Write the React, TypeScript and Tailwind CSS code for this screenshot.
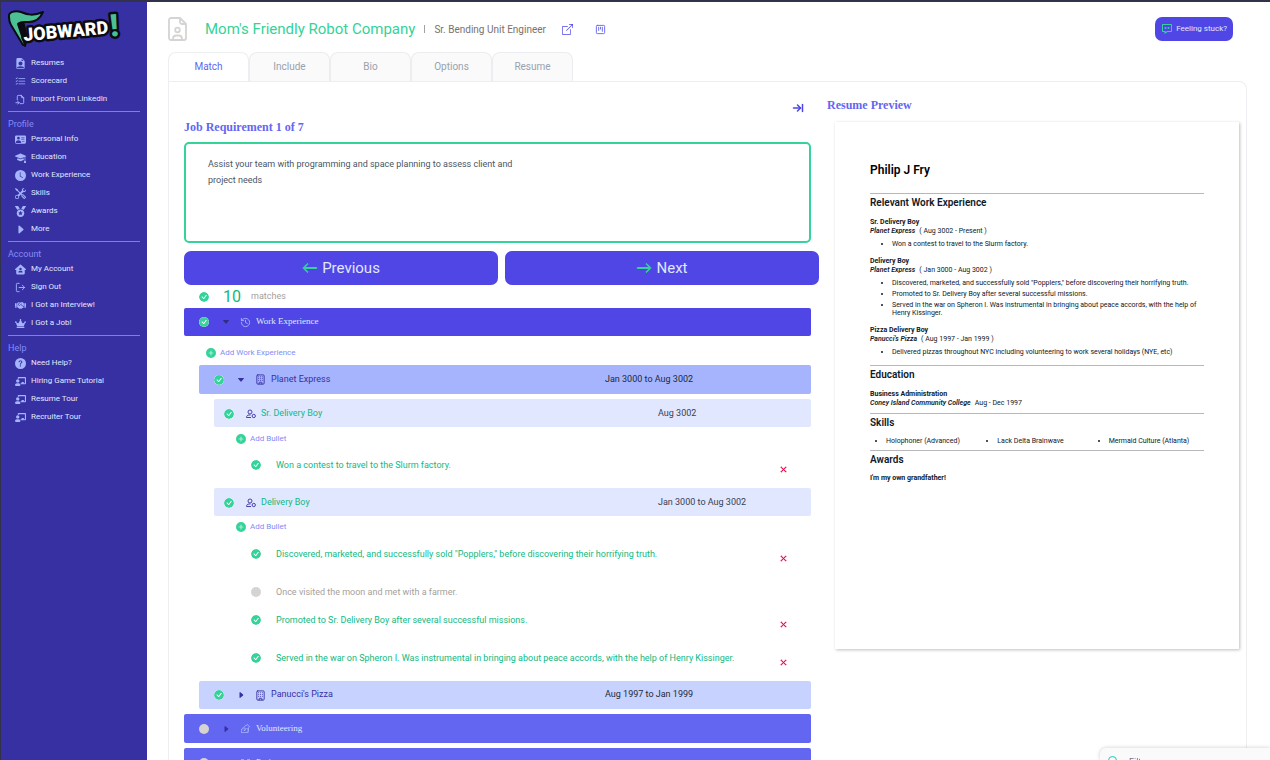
import { useState } from 'react';

import { ArrowRightToLine, Building, History, LogOut, SquareKanban } from 'lucide-react';
import { BiMessageDots } from 'react-icons/bi';
import {
  BsArrowLeft,
  BsArrowRight,
  BsBoxArrowUpRight,
  BsCaretDownFill,
  BsCaretRightFill,
  BsCheckCircleFill,
  BsCircleFill,
  BsClockFill,
  BsFileEarmarkPersonFill,
  BsListCheck,
  BsMortarboardFill,
  BsPersonVcardFill,
  BsPlusCircleFill,
  BsQuestionCircleFill,
  BsTools,
  BsXLg,
} from 'react-icons/bs';
import { FaChalkboardTeacher, FaCrown, FaHandshake, FaMedal } from 'react-icons/fa';
import { FaHouseUser } from 'react-icons/fa6';
import { LiaHandsHelpingSolid, LiaProjectDiagramSolid } from 'react-icons/lia';
import { TbFileImport } from 'react-icons/tb';

import type { ComponentType, FC, ReactNode } from 'react';

type IconComponent = ComponentType<{ className?: string }>;
type NavItem = { title: string, icon: IconComponent };
type NavSection = { title?: string, items: NavItem[] };

const navSections: NavSection[] = [
  {
    items: [
      { title: 'Resumes', icon: BsFileEarmarkPersonFill },
      { title: 'Scorecard', icon: BsListCheck },
      { title: 'Import From LinkedIn', icon: TbFileImport },
    ],
  },
  {
    title: 'Profile',
    items: [
      { title: 'Personal Info', icon: BsPersonVcardFill },
      { title: 'Education', icon: BsMortarboardFill },
      { title: 'Work Experience', icon: BsClockFill },
      { title: 'Skills', icon: BsTools },
      { title: 'Awards', icon: FaMedal },
      { title: 'More', icon: BsCaretRightFill },
    ],
  },
  {
    title: 'Account',
    items: [
      { title: 'My Account', icon: FaHouseUser },
      { title: 'Sign Out', icon: LogOut },
      { title: 'I Got an Interview!', icon: FaHandshake },
      { title: 'I Got a Job!', icon: FaCrown },
    ],
  },
  {
    title: 'Help',
    items: [
      { title: 'Need Help?', icon: BsQuestionCircleFill },
      { title: 'Hiring Game Tutorial', icon: FaChalkboardTeacher },
      { title: 'Resume Tour', icon: FaChalkboardTeacher },
      { title: 'Recruiter Tour', icon: FaChalkboardTeacher },
    ],
  },
];

const tabs = ['Match', 'Include', 'Bio', 'Options', 'Resume'];

const Logo: FC = () => (
  <svg className="h-[42px] w-[116px] overflow-visible" viewBox="0 0 116 42" role="img" aria-label="Jobward">
    <path d="M8 12 17 36 19 28 15 11Z" fill="#0b0b12" stroke="#0b0b12" strokeWidth="2" strokeLinejoin="round" />
    <path
      d="M1 7C0 2 7 0 13 2c7 3 12 4 22 0-3 7-8 10-14 10-5 0-8-1-11 2l7 21h-2L3 15C1 12 1 10 1 7Z"
      fill="#4cbf95"
      stroke="#0b0b12"
      strokeWidth="2"
      strokeLinejoin="round"
    />
    <g
      transform="rotate(-5 16 34)"
      fontFamily="Roboto, sans-serif"
      fontWeight="900"
      strokeLinejoin="round"
      paintOrder="stroke"
      stroke="#0b0b12"
      strokeWidth="5"
    >
      <text x="16" y="31" fontSize="18" fill="#fff">JOBWARD</text>
      <text x="103" y="34" fontSize="31" fill="#4cbf95">!</text>
    </g>
  </svg>
);

const FilePersonIcon: FC = () => (
  <svg
    className="h-6 w-5 text-stone-300"
    viewBox="0 0 20 24"
    fill="none"
    stroke="currentColor"
    strokeWidth="1.8"
    strokeLinejoin="round"
    aria-hidden="true"
  >
    <path d="M3 1h9l6 6v14a2 2 0 0 1-2 2H3a2 2 0 0 1-2-2V3a2 2 0 0 1 2-2Z" />
    <path d="M12 1v4a2 2 0 0 0 2 2h4" />
    <circle cx="9.5" cy="13" r="2.3" />
    <path d="M5 23v-1c0-2 1.5-3.500 3.500-3.500h2c2 0 3.500 1.500 3.500 3.500v1" />
  </svg>
);

const PersonBadgeIcon: FC = () => (
  <svg
    className="mr-[5px] ml-3 size-[10px] text-[#3730a3]"
    viewBox="0 0 20 20"
    fill="none"
    stroke="currentColor"
    strokeWidth="1.8"
    strokeLinejoin="round"
    aria-hidden="true"
  >
    <circle cx="8" cy="6" r="4" />
    <path d="M10 17H1c0-3 2-5 5-5h3" />
    <circle cx="15.500" cy="14" r="3.300" />
  </svg>
);

const Sidebar: FC = () => (
  <aside className="w-[147px] shrink-0 overflow-hidden border-l border-[#32324a] bg-[#3730a3] px-[7px] pt-2">
    <a href="#" className="block h-11"><Logo /></a>
    <nav>
      {navSections.map((section) => (
        <section key={section.title ?? 'main'} className="mb-[3px]">
          {section.title && (
            <h2 className="h-[19px] border-t border-[#8583b8] pt-1 text-[9px] leading-4 text-[#818cf8]">
              {section.title}
            </h2>
          )}
          <ul>
            {section.items.map(({ title, icon: Icon }) => (
              <li key={title}>
                <a href="#" className="flex h-[18px] items-center gap-[5px] pl-[7px] text-[8px] text-[#e0e7ff]">
                  <Icon className="size-[11px] text-[#a5b4fc]" />
                  {title}
                </a>
              </li>
            ))}
          </ul>
        </section>
      ))}
    </nav>
  </aside>
);

interface CheckProps {
  label: string
  initial?: boolean
}

const Check: FC<CheckProps> = ({ label, initial = true }) => {
  const [checked, setChecked] = useState(initial);

  return (
    <label className="shrink-0 cursor-pointer">
      <input
        type="checkbox"
        className="sr-only"
        aria-label={label}
        checked={checked}
        onChange={() => setChecked(!checked)}
      />
      {checked ? (
        <BsCheckCircleFill className="size-[10px] rounded-full bg-white text-[#34d399]" />
      ) : (
        <BsCircleFill className="size-[10px] text-stone-300" />
      )}
    </label>
  );
};

const AddButton: FC<{ children: ReactNode }> = ({ children }) => (
  <button type="button" className="flex items-center gap-1 text-[8px] leading-3 text-[#818cf8]">
    <BsPlusCircleFill className="size-[10px] text-[#34d399]" />
    {children}
  </button>
);

interface SectionBarProps {
  title: string
  icon: IconComponent
  open?: boolean
}

const SectionBar: FC<SectionBarProps> = ({ title, icon: Icon, open = false }) => (
  <div
    className={`flex items-center rounded-xs pl-[15px] ${open ? 'h-7 bg-[#4f46e5]' : 'h-[29px] bg-[#6366f1]'}`}
  >
    <Check label={title} initial={open} />
    <button type="button" className="ml-[13px] flex items-center font-[Liberation_Serif,serif] text-[9px] text-[#e0e7ff]">
      {open ? (
        <BsCaretDownFill className="size-2 text-[#312e81]" />
      ) : (
        <BsCaretRightFill className="size-2 text-[#3730a3]" />
      )}
      <Icon className="mr-[5px] ml-[10px] size-[11px] text-[#a5b4fc]" />
      {title}
    </button>
  </div>
);

interface CompanyBarProps {
  title: string
  dates: string
  open?: boolean
}

const CompanyBar: FC<CompanyBarProps> = ({ title, dates, open = false }) => (
  <div
    className={`ml-[15px] flex items-center rounded-xs pl-[15px] text-[9px] text-[#3730a3] ${open ? 'h-[29px] bg-[#a5b4fc]' : 'h-7 bg-[#c7d2fe]'}`}
  >
    <Check label={title} />
    <button type="button" className="ml-[13px] flex flex-1 items-center">
      {open ? <BsCaretDownFill className="size-2" /> : <BsCaretRightFill className="size-2" />}
      <Building className="mr-[5px] ml-[10px] size-[11px]" />
      {title}
    </button>
    <span className="w-[206px] text-gray-800">{dates}</span>
  </div>
);

const RoleBar: FC<{ title: string, dates: string }> = ({ title, dates }) => (
  <div className="ml-[30px] flex h-7 items-center rounded-xs bg-[#e0e7ff] pt-px pl-[10px] text-[9px]">
    <Check label={title} />
    <PersonBadgeIcon />
    <span className="flex-1 text-[#10b981]">{title}</span>
    <span className="w-[153px] text-gray-700">{dates}</span>
  </div>
);

interface BulletProps {
  text: string
  selected?: boolean
}

const Bullet: FC<BulletProps> = ({ text, selected = true }) => (
  <li className={`flex items-start ${selected ? 'h-5' : 'h-[10px]'}`}>
    <Check label={text} initial={selected} />
    <span className={`ml-[15px] flex-1 text-[9px] leading-[10px] ${selected ? 'text-[#10b981]' : 'text-stone-400'}`}>
      {text}
    </span>
    {selected && (
      <button type="button" aria-label="Remove bullet" className="mt-[6px] mr-6">
        <BsXLg className="size-[7px] stroke-2 text-rose-600" />
      </button>
    )}
  </li>
);

const MatchPanel: FC = () => (
  <div className="pl-[15px]">
    <div className="flex justify-end pt-5 pr-[15px]">
      <button type="button" aria-label="Collapse panel">
        <ArrowRightToLine className="size-3 stroke-3 text-[#4f46e5]" />
      </button>
    </div>
    <label
      htmlFor="requirement"
      className="mt-[5px] block font-[Liberation_Serif,serif] text-[12px] leading-4 font-bold text-[#6366f1]"
    >
      Job Requirement 1 of 7
    </label>
    <div className="pr-2">
      <textarea
        id="requirement"
        className="mt-[7px] block h-[101px] w-full resize-none rounded-[5px] border-2 border-[#34d399] px-[22px] py-3 text-[9px] leading-4 text-gray-600 outline-none"
        defaultValue={'Assist your team with programming and space planning to assess client and\nproject needs'}
      />
    </div>
    <div className="mt-2 grid grid-cols-2 gap-[7px] text-[15px] text-[#e0e7ff]">
      <button type="button" className="flex h-[34px] items-center justify-center gap-1 rounded-[7px] bg-[#4f46e5]">
        <BsArrowLeft className="size-4 stroke-1 text-[#34d399]" />
        Previous
      </button>
      <button type="button" className="flex h-[34px] items-center justify-center gap-1 rounded-[7px] bg-[#4f46e5]">
        <BsArrowRight className="size-4 stroke-1 text-[#34d399]" />
        Next
      </button>
    </div>

    <div className="pr-2">
      <div className="flex h-[23px] items-center pl-[15px]">
        <Check label="All matches" />
        <span className="ml-[14px] text-[16px] text-[#10b981]">10</span>
        <span className="ml-[10px] text-[9px] text-stone-400">matches</span>
      </div>

      <SectionBar title="Work Experience" icon={History} open />
      <div className="pt-[11px] pb-[6px] pl-[22px]">
        <AddButton>Add Work Experience</AddButton>
      </div>
      <CompanyBar title="Planet Express" dates="Jan 3000 to Aug 3002" open />
      <div className="pt-[5px]">
        <RoleBar title="Sr. Delivery Boy" dates="Aug 3002" />
      </div>
      <div className="pt-[6px] pl-[52px]">
        <AddButton>Add Bullet</AddButton>
      </div>
      <ul className="mt-[15px] pl-[67px]">
        <Bullet text="Won a contest to travel to the Slurm factory." />
      </ul>
      <div className="pt-2">
        <RoleBar title="Delivery Boy" dates="Jan 3000 to Aug 3002" />
      </div>
      <div className="pt-[5px] pl-[52px]">
        <AddButton>Add Bullet</AddButton>
      </div>
      <ul className="mt-4 flex flex-col gap-[18px] pl-[67px]">
        <Bullet text={'Discovered, marketed, and successfully sold "Popplers," before discovering their horrifying truth.'} />
        <Bullet text="Once visited the moon and met with a farmer." selected={false} />
        <Bullet text="Promoted to Sr. Delivery Boy after several successful missions." />
        <Bullet text="Served in the war on Spheron I. Was instrumental in bringing about peace accords, with the help of Henry Kissinger." />
      </ul>
      <div className="flex flex-col gap-[5px] pt-2">
        <CompanyBar title="Panucci's Pizza" dates="Aug 1997 to Jan 1999" />
        <SectionBar title="Volunteering" icon={LiaHandsHelpingSolid} />
        <SectionBar title="Projects" icon={LiaProjectDiagramSolid} />
      </div>
    </div>
  </div>
);

interface ResumeSectionProps {
  title: string
  children: ReactNode
}

const ResumeSection: FC<ResumeSectionProps> = ({ title, children }) => (
  <section className="border-t border-[#b8b8bc] pt-[2px]">
    <h3 className="text-[10px] leading-[14px] font-semibold text-gray-900">{title}</h3>
    {children}
  </section>
);

interface ResumeJobProps {
  role: string
  company: string
  dates: string
  bullets: string[]
}

const ResumeJob: FC<ResumeJobProps> = ({ role, company, dates, bullets }) => (
  <div className="mb-[9px]">
    <h4 className="text-[7px] leading-[9px] font-bold">{role}</h4>
    <p className="flex gap-1 text-[7px] leading-[9px]">
      <em className="font-semibold">{company}</em>
      <span>{`( ${dates} )`}</span>
    </p>
    <ul className="mt-1 flex list-disc flex-col gap-[3px] pl-[22px] text-[7px] leading-2">
      {bullets.map((bullet) => (
        <li key={bullet}>{bullet}</li>
      ))}
    </ul>
  </div>
);

const ResumePreview: FC = () => (
  <div className="pt-[15px] pl-2">
    <h2 className="font-[Liberation_Serif,serif] text-[12px] leading-4 font-bold text-[#6366f1]">Resume Preview</h2>
    <article className="mt-[9px] mr-[7px] ml-2 min-h-[527px] bg-white px-[35px] pt-[39px] text-gray-900 shadow-[1px_1px_3px_rgba(0,0,0,0.25)]">
      <h1 className="mb-[14px] text-[12px] leading-[18px] font-semibold text-black">Philip J Fry</h1>
      <ResumeSection title="Relevant Work Experience">
        <div className="pt-2">
          <ResumeJob
            role="Sr. Delivery Boy"
            company="Planet Express"
            dates="Aug 3002 - Present"
            bullets={['Won a contest to travel to the Slurm factory.']}
          />
          <ResumeJob
            role="Delivery Boy"
            company="Planet Express"
            dates="Jan 3000 - Aug 3002"
            bullets={[
              'Discovered, marketed, and successfully sold "Popplers," before discovering their horrifying truth.',
              'Promoted to Sr. Delivery Boy after several successful missions.',
              'Served in the war on Spheron I. Was instrumental in bringing about peace accords, with the help of Henry Kissinger.',
            ]}
          />
          <ResumeJob
            role="Pizza Delivery Boy"
            company="Panucci's Pizza"
            dates="Aug 1997 - Jan 1999"
            bullets={['Delivered pizzas throughout NYC including volunteering to work several holidays (NYE, etc)']}
          />
        </div>
      </ResumeSection>
      <ResumeSection title="Education">
        <div className="pt-2 pb-[5px] text-[7px] leading-[9px]">
          <h4 className="font-bold">Business Administration</h4>
          <p className="flex gap-1">
            <em className="font-semibold">Coney Island Community College</em>
            <span>Aug - Dec 1997</span>
          </p>
        </div>
      </ResumeSection>
      <ResumeSection title="Skills">
        <ul className="grid list-disc grid-cols-3 pt-[7px] pb-[5px] text-[7px] leading-2">
          <li className="ml-4">Holophoner (Advanced)</li>
          <li className="ml-4">Lack Delta Brainwave</li>
          <li className="ml-4">Mermaid Culture (Atlanta)</li>
        </ul>
      </ResumeSection>
      <ResumeSection title="Awards">
        <p className="pt-[7px] text-[7px] leading-[9px] font-bold">I'm my own grandfather!</p>
      </ResumeSection>
    </article>
  </div>
);

const App: FC = () => {
  const [activeTab, setActiveTab] = useState('Match');

  return (
    <div className="flex h-screen overflow-hidden border-t-2 border-[#32324a] bg-white font-[Roboto,sans-serif]">
      <Sidebar />
      <main className="flex min-w-0 flex-1 flex-col pr-[23px] pl-[21px]">
        <header className="flex h-[50px] shrink-0 items-center pt-1">
          <FilePersonIcon />
          <h1 className="ml-[17px] text-[15px] text-[#34d399]">Mom's Friendly Robot Company</h1>
          <span className="mx-[9px] h-2 w-px bg-stone-400" />
          <span className="text-[10px] text-stone-500">Sr. Bending Unit Engineer</span>
          <a href="#" aria-label="Open job posting" className="ml-4">
            <BsBoxArrowUpRight className="size-[11px] text-[#4f46e5]" />
          </a>
          <button type="button" aria-label="Show board" className="ml-[22px]">
            <SquareKanban className="size-[11px] text-[#6366f1]" />
          </button>
          <button
            type="button"
            className="mr-[14px] ml-auto flex h-6 items-center gap-[3px] rounded-[7px] bg-[#4f46e5] px-[6px] text-[8px] text-[#e0e7ff]"
          >
            <BiMessageDots className="size-3 text-[#34d399]" />
            Feeling stuck?
          </button>
        </header>

        <div role="tablist" className="flex shrink-0">
          {tabs.map((tab) => (
            <button
              key={tab}
              type="button"
              role="tab"
              aria-selected={tab === activeTab}
              onClick={() => setActiveTab(tab)}
              className={`h-[29px] w-[81px] rounded-t-lg border border-b-0 border-gray-200/70 pb-[2px] text-[10px] ${tab === activeTab ? 'bg-white text-[#6366f1]' : 'bg-neutral-50 text-gray-400'}`}
            >
              {tab}
            </button>
          ))}
        </div>

        <div className="grid min-h-0 flex-1 grid-cols-[650fr_427fr] overflow-hidden rounded-tr-lg border border-b-0 border-gray-200/70">
          <MatchPanel />
          <ResumePreview />
        </div>
      </main>

      <div className="fixed right-0 bottom-0 flex h-3 w-[170px] items-start gap-3 overflow-hidden rounded-tl-md bg-neutral-50 pt-2 pl-2 text-[9px] text-gray-500 shadow-[0_0_4px_rgba(0,0,0,0.2)]">
        <span className="size-[9px] shrink-0 rounded-full border border-teal-400" />
        <span>Filter</span>
      </div>
    </div>
  );
};

export default App;
